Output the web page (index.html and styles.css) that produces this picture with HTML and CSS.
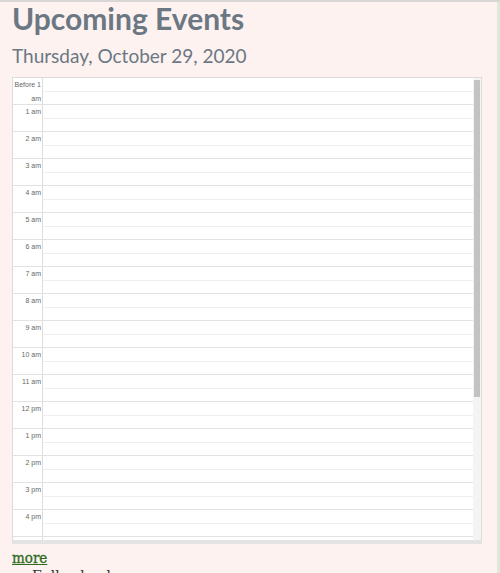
FILE: index.html
```html
<!DOCTYPE html>
<html>
<head>
<meta charset="utf-8">
<link rel="stylesheet" href="styles.css">
</head>
<body>
<div class="page">
  <h1 class="title">Upcoming Events</h1>
  <h2 class="date">Thursday, October 29, 2020</h2>
  <div class="cal">
    <div class="scroller">
      <div class="row"><div class="time">Before 1 am</div><div class="slots"><div class="half"></div><div class="half"></div></div></div>
      <div class="row"><div class="time">1 am</div><div class="slots"><div class="half"></div><div class="half"></div></div></div>
      <div class="row"><div class="time">2 am</div><div class="slots"><div class="half"></div><div class="half"></div></div></div>
      <div class="row"><div class="time">3 am</div><div class="slots"><div class="half"></div><div class="half"></div></div></div>
      <div class="row"><div class="time">4 am</div><div class="slots"><div class="half"></div><div class="half"></div></div></div>
      <div class="row"><div class="time">5 am</div><div class="slots"><div class="half"></div><div class="half"></div></div></div>
      <div class="row"><div class="time">6 am</div><div class="slots"><div class="half"></div><div class="half"></div></div></div>
      <div class="row"><div class="time">7 am</div><div class="slots"><div class="half"></div><div class="half"></div></div></div>
      <div class="row"><div class="time">8 am</div><div class="slots"><div class="half"></div><div class="half"></div></div></div>
      <div class="row"><div class="time">9 am</div><div class="slots"><div class="half"></div><div class="half"></div></div></div>
      <div class="row"><div class="time">10 am</div><div class="slots"><div class="half"></div><div class="half"></div></div></div>
      <div class="row"><div class="time">11 am</div><div class="slots"><div class="half"></div><div class="half"></div></div></div>
      <div class="row"><div class="time">12 pm</div><div class="slots"><div class="half"></div><div class="half"></div></div></div>
      <div class="row"><div class="time">1 pm</div><div class="slots"><div class="half"></div><div class="half"></div></div></div>
      <div class="row"><div class="time">2 pm</div><div class="slots"><div class="half"></div><div class="half"></div></div></div>
      <div class="row"><div class="time">3 pm</div><div class="slots"><div class="half"></div><div class="half"></div></div></div>
      <div class="row"><div class="time">4 pm</div><div class="slots"><div class="half"></div><div class="half"></div></div></div>
      <div class="row"><div class="time">5 pm</div><div class="slots"><div class="half"></div><div class="half"></div></div></div>
      <div class="row"><div class="time">6 pm</div><div class="slots"><div class="half"></div><div class="half"></div></div></div>
      <div class="row"><div class="time">7 pm</div><div class="slots"><div class="half"></div><div class="half"></div></div></div>
      <div class="row"><div class="time">8 pm</div><div class="slots"><div class="half"></div><div class="half"></div></div></div>
      <div class="row"><div class="time">9 pm</div><div class="slots"><div class="half"></div><div class="half"></div></div></div>
      <div class="row"><div class="time">10 pm</div><div class="slots"><div class="half"></div><div class="half"></div></div></div>
      <div class="row"><div class="time">11 pm</div><div class="slots"><div class="half"></div><div class="half"></div></div></div>
    </div>
    <div class="track"><div class="thumb"></div></div>
  </div>
  <a class="more" href="#">more</a>
  <ul class="list"><li>Full calendar</li></ul>
</div>
</body>
</html>
```
FILE: styles.css
```css
html, body {
  margin: 0;
  padding: 0;
  background: #fdf2f0;
}
body {
  border-top: 2px solid #d9d6d5;
  box-sizing: border-box;
  height: 573px;
  overflow: hidden;
}
.page {
  padding: 0 15px 0 12px;
  border-right: 3px solid #dfe9d7;
  height: 100%;
  box-sizing: border-box;
}
.title {
  margin: 0;
  font-family: Lato, "Open Sans", sans-serif;
  font-weight: 700;
  font-size: 30px;
  line-height: 32px;
  color: #6b7883;
}
.date {
  margin: 10px 0 0 0;
  font-family: Lato, "Open Sans", sans-serif;
  font-weight: 400;
  font-size: 19px;
  line-height: 24px;
  color: #6b7883;
}
.cal {
  margin-top: 9px;
  width: 468px;
  display: flex;
  border: 1px solid #dcdcdc;
  border-bottom: 4px solid #e4e4e4;
  background: #fff;
}
.scroller {
  flex: 1;
  height: 462px;
  overflow: hidden;
}
.track {
  width: 8px;
  flex: none;
  background: #f4f4f4;
  padding-top: 2px;
  box-sizing: border-box;
}
.thumb {
  width: 6px;
  margin-left: 1px;
  height: 317px;
  background: #c3c3c3;
}
.row {
  display: flex;
  height: 27px;
  border-bottom: 1px solid #e2e2e2;
  box-sizing: border-box;
}
.time {
  width: 28px;
  flex: none;
  border-right: 1px solid #dddddd;
  font-family: "Liberation Sans", Arial, sans-serif;
  font-size: 7px;
  line-height: 14px;
  color: #666;
  text-align: right;
  padding: 0 1px 0 0;
  opacity: 0.99;
}
.slots {
  flex: 1;
  display: flex;
  flex-direction: column;
}
.half {
  flex: 1;
}
.half:first-child {
  border-bottom: 1px solid #efefef;
}
.more {
  display: inline-block;
  margin-top: 5px;
  font-family: "DejaVu Serif", serif;
  font-stretch: condensed;
  font-size: 15px;
  line-height: 18px;
  color: #2e6b1f;
  -webkit-text-stroke: 0.3px #2e6b1f;
}
.list {
  margin: 0;
  padding-left: 20px;
  font-family: "DejaVu Serif", serif;
  font-size: 14px;
  line-height: 18px;
  color: #333;
}
```
